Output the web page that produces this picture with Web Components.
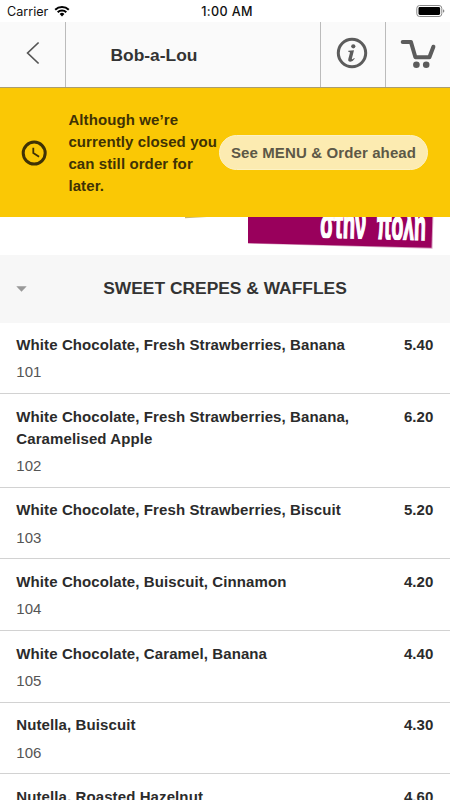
<!DOCTYPE html>
<html lang="en">
<head>
<meta charset="utf-8">
<title>Bob-a-Lou</title>
<style>
  body {
    margin: 0;
    height: 800px;
    overflow: hidden;
    background: #fff;
    color: #2b2b2b;
    font: 15px/21.8px "Liberation Sans", Arial, sans-serif;
  }
</style>
</head>
<body>
<status-bar carrier="Carrier" time="1:00 AM"></status-bar>
<nav-bar>Bob-a-Lou</nav-bar>
<closed-notice action="See MENU &amp; Order ahead">Although we’re currently closed you can still order for later.</closed-notice>
<shop-logo></shop-logo>
<menu-section heading="SWEET CREPES &amp; WAFFLES">
  <menu-item code="101" price="5.40">White Chocolate, Fresh Strawberries, Banana</menu-item>
  <menu-item code="102" price="6.20">White Chocolate, Fresh Strawberries, Banana, Caramelised Apple</menu-item>
  <menu-item code="103" price="5.20">White Chocolate, Fresh Strawberries, Biscuit</menu-item>
  <menu-item code="104" price="4.20">White Chocolate, Buiscuit, Cinnamon</menu-item>
  <menu-item code="105" price="4.40">White Chocolate, Caramel, Banana</menu-item>
  <menu-item code="106" price="4.30">Nutella, Buiscuit</menu-item>
  <menu-item price="4.60">Nutella, Roasted Hazelnut</menu-item>
</menu-section>

<script>
class StatusBar extends HTMLElement {
  constructor() {
    super();
    this.attachShadow({mode: 'open'});
  }

  connectedCallback() {
    this.shadowRoot.innerHTML = `
      <style>
        :host {
          display: grid;
          grid-template-columns: 1fr auto 1fr;
          align-items: center;
          height: 22px;
          box-sizing: border-box;
          padding: 1px 5px 0 7px;
          color: #111;
          font: 12.6px/20px Inter, sans-serif;
        }
        .left { display: flex; align-items: center; gap: 6px; }
        .left svg { margin-top: -1px; }
        .time { padding-left: 2px; font-weight: 500; letter-spacing: .35px; }
        .battery { justify-self: end; margin-top: -1px; }
        svg { display: block; }
      </style>
      <div class="left">
        <span>${this.getAttribute('carrier')}</span>
        <svg width="16" height="12" viewBox="0 0 16 12" fill="none" stroke="#000" stroke-width="2">
          <path d="M1.2 4.7a9.7 9.7 0 0 1 13.6 0M3.7 7.2a6.1 6.1 0 0 1 8.6 0"/>
          <path d="M8 11.5 5.6 9a3.5 3.5 0 0 1 4.8 0z" fill="#000" stroke="none"/>
        </svg>
      </div>
      <span class="time">${this.getAttribute('time')}</span>
      <svg class="battery" width="29" height="12" viewBox="0 0 29 12">
        <rect x=".8" y=".5" width="25" height="11" rx="2.8" fill="#fff" stroke="#888"/>
        <rect x="2.5" y="2" width="21.6" height="8" rx="1.4"/>
        <path d="M27 4.2q1.4.5 1.4 1.8T27 7.8z" fill="#888"/>
      </svg>
    `;
  }
}

class NavBar extends HTMLElement {
  constructor() {
    super();
    this.attachShadow({mode: 'open'});
    this.shadowRoot.innerHTML = `
      <style>
        :host {
          display: grid;
          grid-template-columns: 65px 1fr 65px 65px;
          height: 66px;
          box-sizing: border-box;
          border-bottom: 1px solid #a99d70;
          background: #fafafa;
        }
        div {
          display: flex;
          align-items: center;
          justify-content: center;
          box-sizing: border-box;
          padding-bottom: 3px;
        }
        div + div { border-left: 1px solid #bbb; }
        .title {
          justify-content: flex-start;
          padding: 2px 0 0 44.5px;
          font-size: 17.4px;
          font-weight: bold;
          color: #333;
        }
        .info { padding-right: 2px; }
      </style>
      <div>
        <svg width="14" height="24" viewBox="0 0 14 24" fill="none" stroke="#555" stroke-width="1.7">
          <path d="M12.6 1.5 1.6 12l11 10.5"/>
        </svg>
      </div>
      <div class="title"><slot></slot></div>
      <div class="info">
        <svg width="32" height="32" viewBox="0 0 32 32">
          <circle cx="16" cy="16" r="13.7" fill="none" stroke="#5c5c5c" stroke-width="3"/>
          <circle cx="17.3" cy="9.3" r="2.1" fill="#5c5c5c"/>
          <path d="M12.3 13.8 18 13.2l-2.1 8.2q-.2 1.1.6.9.8-.3 1.6-1.3l.7.5q-2 3.2-4.4 3.2-2.7 0-2.1-2.7l1.6-6q.2-.9-.4-1.1l-1.3-.2z" fill="#5c5c5c"/>
        </svg>
      </div>
      <div>
        <svg width="36" height="32" viewBox="0 0 36 32" fill="none" stroke="#5c5c5c" stroke-width="4" stroke-linecap="round" stroke-linejoin="round">
          <path d="M2.7 4.9h8.2l4.5 15.4h14L33.4 9.7"/>
          <g fill="#5c5c5c" stroke="none">
            <circle cx="16.4" cy="27.8" r="3.3"/>
            <circle cx="26.2" cy="27.8" r="3.3"/>
          </g>
        </svg>
      </div>
    `;
  }
}

class ClosedNotice extends HTMLElement {
  constructor() {
    super();
    this.attachShadow({mode: 'open'});
  }

  connectedCallback() {
    this.shadowRoot.innerHTML = `
      <style>
        :host {
          display: flex;
          align-items: center;
          height: 129px;
          padding: 0 22px 0 21px;
          background: #fac805;
          color: #3f3205;
          font-weight: bold;
          letter-spacing: .1px;
        }
        svg { flex: none; margin-right: 21.4px; }
        p { flex: 1; margin: 0; padding-top: 1px; }
        button {
          flex: none;
          width: 209px;
          height: 35px;
          padding: 0;
          border: 1px solid #fdf2c4;
          border-radius: 18px;
          background: #fcebb1;
          color: #5c5847;
          font: inherit;
          letter-spacing: .12px;
        }
      </style>
      <svg width="26" height="26" viewBox="0 0 26 26" fill="none" stroke="#3f3205">
        <circle cx="13.2" cy="13.1" r="11" stroke-width="3"/>
        <path d="M12.3 7.8v5.1l5.8 3.8" stroke-width="1.8"/>
      </svg>
      <p><slot></slot></p>
      <button></button>
    `;
    this.shadowRoot.querySelector('button').textContent = this.getAttribute('action');
  }
}

// Lower edge of the shop logo, the rest is scrolled under the notice
class ShopLogo extends HTMLElement {
  constructor() {
    super();
    this.attachShadow({mode: 'open'});
    this.shadowRoot.innerHTML = `
      <style>
        :host { display: block; height: 38px; overflow: hidden; }
        svg { display: block; }
        text { font: bold 42px "Liberation Sans", Arial, sans-serif; }
      </style>
      <svg width="450" height="38" viewBox="0 0 450 38">
        <clipPath id="base"><path d="M300 0H450V24.6L300 20.6z"/></clipPath>
        <path d="M185 0h22l-22 1.3z" fill="#c9b768"/>
        <path d="M248 0h185.4l-.9 31.7-184.5-5z" fill="#d9a5c4"/>
        <path d="M248 0h184.4l-.9 30.8-183.5-4.8z" fill="#99005c"/>
        <g clip-path="url(#base)" fill="#fff" stroke="#fff" stroke-width="1.8">
          <text transform="translate(320 20.7) rotate(1.5)" textLength="46" lengthAdjust="spacingAndGlyphs">στην</text>
          <text transform="translate(376.5 22) rotate(1.5)" textLength="49" lengthAdjust="spacingAndGlyphs">πόλη</text>
        </g>
      </svg>
    `;
  }
}

class MenuSection extends HTMLElement {
  constructor() {
    super();
    this.attachShadow({mode: 'open'});
  }

  connectedCallback() {
    this.shadowRoot.innerHTML = `
      <style>
        :host { display: block; }
        header {
          display: grid;
          grid-template-columns: 12px 1fr 12px;
          align-items: center;
          height: 67.5px;
          padding: 0 16px;
          background: #f7f7f7;
        }
        h2 {
          margin: 0;
          padding-top: 1px;
          text-align: center;
          font-size: 17.4px;
          color: #333;
        }
      </style>
      <header>
        <svg width="11" height="6" viewBox="0 0 11 6"><path d="M.3.2h10.4L5.5 5.7z" fill="#999"/></svg>
        <h2></h2>
      </header>
      <slot></slot>
    `;
    this.shadowRoot.querySelector('h2').textContent = this.getAttribute('heading');
  }
}

class MenuItem extends HTMLElement {
  constructor() {
    super();
    this.attachShadow({mode: 'open'});
  }

  connectedCallback() {
    this.shadowRoot.innerHTML = `
      <style>
        :host {
          display: grid;
          grid-template-columns: 340px auto;
          justify-content: space-between;
          row-gap: 5.4px;
          padding: 11.8px 16.5px 9.9px 16.3px;
          border-bottom: 1px solid #d2d2d2;
        }
        .name, .price { font-weight: bold; letter-spacing: .1px; }
        .code { color: #555; }
      </style>
      <div class="name"><slot></slot></div>
      <div class="price">${this.getAttribute('price')}</div>
      <div class="code">${this.getAttribute('code') || ''}</div>
    `;
  }
}

customElements.define('status-bar', StatusBar);
customElements.define('nav-bar', NavBar);
customElements.define('closed-notice', ClosedNotice);
customElements.define('shop-logo', ShopLogo);
customElements.define('menu-section', MenuSection);
customElements.define('menu-item', MenuItem);
</script>
</body>
</html>
